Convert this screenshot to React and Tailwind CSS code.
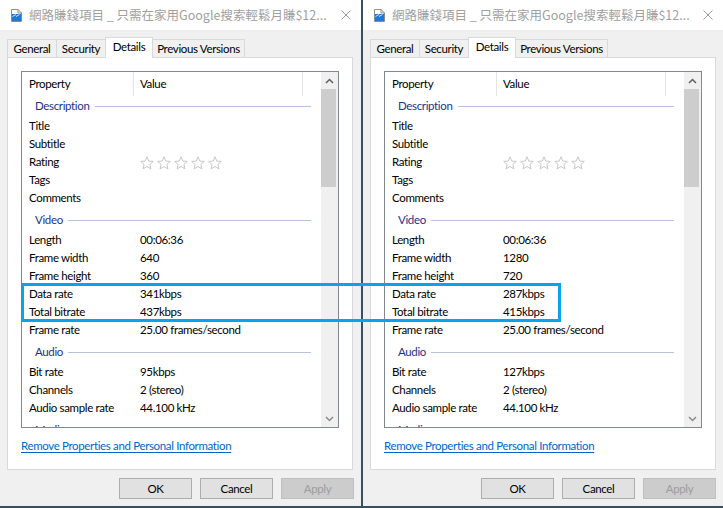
import React from "react"

const ui = "font-[family-name:Lato,'Noto_Sans_CJK_TC',sans-serif] text-[11.5px] leading-[16px] tracking-[-0.35px] text-black"

function FileIcon() {
    return (
        <svg width="11" height="13" viewBox="0 0 11 13" className="shrink-0">
            <path d="M0.5 0.5H7L10.5 4V12.5H0.5Z" fill="#fff" stroke="#8c8c8c" />
            <path d="M7 0.5V4H10.5" fill="none" stroke="#8c8c8c" />
            <rect x="1" y="5" width="9" height="7" fill="#1c7ad6" />
            <path d="M1.5 7.5L5 5.5M5 7.5L8.5 5.5" stroke="#fff" strokeWidth="0.8" />
        </svg>
    )
}

function CloseX() {
    return (
        <svg width="10" height="10" viewBox="0 0 10 10" className="shrink-0">
            <path d="M0.5 0.5L9.5 9.5M9.5 0.5L0.5 9.5" stroke="#9a9a9a" strokeWidth="1" />
        </svg>
    )
}

function Star() {
    return (
        <svg width="14" height="14" viewBox="0 0 14 14">
            <path
                d="M7 0.8L8.8 5.1L13.3 5.4L9.9 8.4L10.9 12.9L7 10.5L3.1 12.9L4.1 8.4L0.7 5.4L5.2 5.1Z"
                fill="none"
                stroke="#c6c6c6"
                strokeWidth="1"
                strokeLinejoin="round"
            />
        </svg>
    )
}

function Row({ label, children }) {
    return (
        <div className="flex h-[18px] items-center whitespace-nowrap">
            <span className="w-[111px] shrink-0 pl-[7px]">{label}</span>
            <span className="flex pl-[7px]">{children}</span>
        </div>
    )
}

// first group sits right under the header, later ones get a little air above
function Group({ title, first }) {
    return (
        <div
            className={
                first
                    ? "flex h-[21px] items-center pb-[1px] pl-[13px] pr-[10px]"
                    : "mt-[4px] flex h-[20px] items-center pb-[2px] pl-[13px] pr-[10px]"
            }
        >
            <span className="text-[#1e3287]">{title}</span>
            <span className="ml-[5px] h-px flex-1 bg-[#b8c0e0]" />
        </div>
    )
}

function Tab({ label, selected, width }) {
    if (selected) {
        return (
            <div className={`relative z-10 -mb-px -ml-px flex h-[21px] items-center justify-center whitespace-nowrap border-x border-t border-[#d9d9d9] bg-white pb-[2px] ${width}`}>
                {label}
            </div>
        )
    }
    return (
        <div className={`-ml-px flex h-[18px] items-center justify-center whitespace-nowrap border-x border-t border-[#d9d9d9] bg-[#f0f0f0] pt-[1px] first:ml-0 ${width}`}>
            {label}
        </div>
    )
}

function Button({ label, disabled }) {
    return (
        <div
            className={
                disabled
                    ? "flex h-[21px] w-[73px] items-center justify-center border border-[#bfbfbf] bg-[#cccccc] text-[#9d9d9d]"
                    : "flex h-[21px] w-[73px] items-center justify-center border border-[#adadad] bg-[#e1e1e1]"
            }
        >
            {label}
        </div>
    )
}

function PropertiesWindow({ v, className }) {
    return (
        <div className={`flex h-[508px] shrink-0 flex-col border-b-2 border-[#36505e] bg-[#f0f0f0] ${className}`}>
            {/* title bar */}
            <div className="flex h-[30px] shrink-0 items-center bg-white pl-[11px] pr-[10px]">
                <FileIcon />
                <span className="ml-[7px] whitespace-nowrap font-[family-name:'Noto_Sans_CJK_TC',sans-serif] text-[12.5px] leading-[16px] tracking-normal text-[#a0a0a0]">
                    網路賺錢項目 _ 只需在家用Google搜索輕鬆月賺$12...
                </span>
                <span className="ml-auto">
                    <CloseX />
                </span>
            </div>

            {/* tabs */}
            <div className="mt-[7px] flex h-[20px] shrink-0 items-end pl-[7px]">
                <Tab label="General" width="w-[50px]" />
                <Tab label="Security" width="w-[50px]" />
                <Tab label="Details" width="w-[48px]" selected />
                <Tab label="Previous Versions" width="w-[93px]" />
            </div>

            {/* details panel */}
            <div className="ml-[7px] flex h-[413px] w-[346px] shrink-0 flex-col border border-[#d9d9d9] bg-white">
                <div className="ml-[13px] mt-[13px] flex h-[357px] w-[318px] border border-[#828790]">
                    <div className="h-full w-[299px] overflow-hidden">
                        <div className="flex h-[24px] items-stretch">
                            <span className="flex w-[112px] items-center border-r border-[#e5e5e5] pl-[7px]">Property</span>
                            <span className="flex w-[169px] items-center border-r border-[#e5e5e5] pl-[6px]">Value</span>
                        </div>

                        <Group title="Description" first />
                        <Row label="Title" />
                        <Row label="Subtitle" />
                        <Row label="Rating">
                            <span className="flex gap-[3px] pt-[1px]">
                                <Star />
                                <Star />
                                <Star />
                                <Star />
                                <Star />
                            </span>
                        </Row>
                        <Row label="Tags" />
                        <Row label="Comments" />

                        <Group title="Video" />
                        <Row label="Length">00:06:36</Row>
                        <Row label="Frame width">{v.width}</Row>
                        <Row label="Frame height">{v.height}</Row>
                        <Row label="Data rate">{v.dataRate}</Row>
                        <Row label="Total bitrate">{v.total}</Row>
                        <Row label="Frame rate">25.00 frames/second</Row>

                        <Group title="Audio" />
                        <Row label="Bit rate">{v.bitRate}</Row>
                        <Row label="Channels">2 (stereo)</Row>
                        <Row label="Audio sample rate">44.100 kHz</Row>

                        <Group title="Media" />
                    </div>

                    {/* scrollbar */}
                    <div className="flex h-full w-[17px] flex-col bg-[#f0f0f0]">
                        <div className="flex h-[17px] items-center justify-center">
                            <svg width="9" height="6" viewBox="0 0 9 6">
                                <path d="M1 5L4.5 1.5L8 5" fill="none" stroke="#606060" strokeWidth="1.5" />
                            </svg>
                        </div>
                        <div className="h-[98px] w-[15px] bg-[#cdcdcd]" />
                        <div className="mt-auto flex h-[17px] items-center justify-center">
                            <svg width="9" height="6" viewBox="0 0 9 6">
                                <path d="M1 1L4.5 4.5L8 1" fill="none" stroke="#8a8a8a" strokeWidth="1.5" />
                            </svg>
                        </div>
                    </div>
                </div>

                <a className="ml-[13px] mt-[10px] self-start text-[#0066cc] underline underline-offset-[2px]">
                    Remove Properties and Personal Information
                </a>
            </div>

            {/* buttons */}
            <div className="mt-[8px] flex justify-end gap-[8px] pr-[7px]">
                <Button label="OK" />
                <Button label="Cancel" />
                <Button label="Apply" disabled />
            </div>
        </div>
    )
}

const left = { width: "640", height: "360", dataRate: "341kbps", total: "437kbps", bitRate: "95kbps" }
const right = { width: "1280", height: "720", dataRate: "287kbps", total: "415kbps", bitRate: "127kbps" }

export default function App() {
    return (
        <div className={`relative flex h-[508px] w-[723px] overflow-hidden bg-[#f0f0f0] ${ui}`}>
            <PropertiesWindow v={left} className="w-[362px] border-r border-r-[#36505e]" />
            <PropertiesWindow v={right} className="w-[361px] border-l border-l-[#36505e]" />

            {/* highlight drawn over both windows */}
            <div className="pointer-events-none absolute left-[21px] top-[283px] h-[39px] w-[540px] border-[3px] border-[#0aa2e8]" />
        </div>
    )
}
